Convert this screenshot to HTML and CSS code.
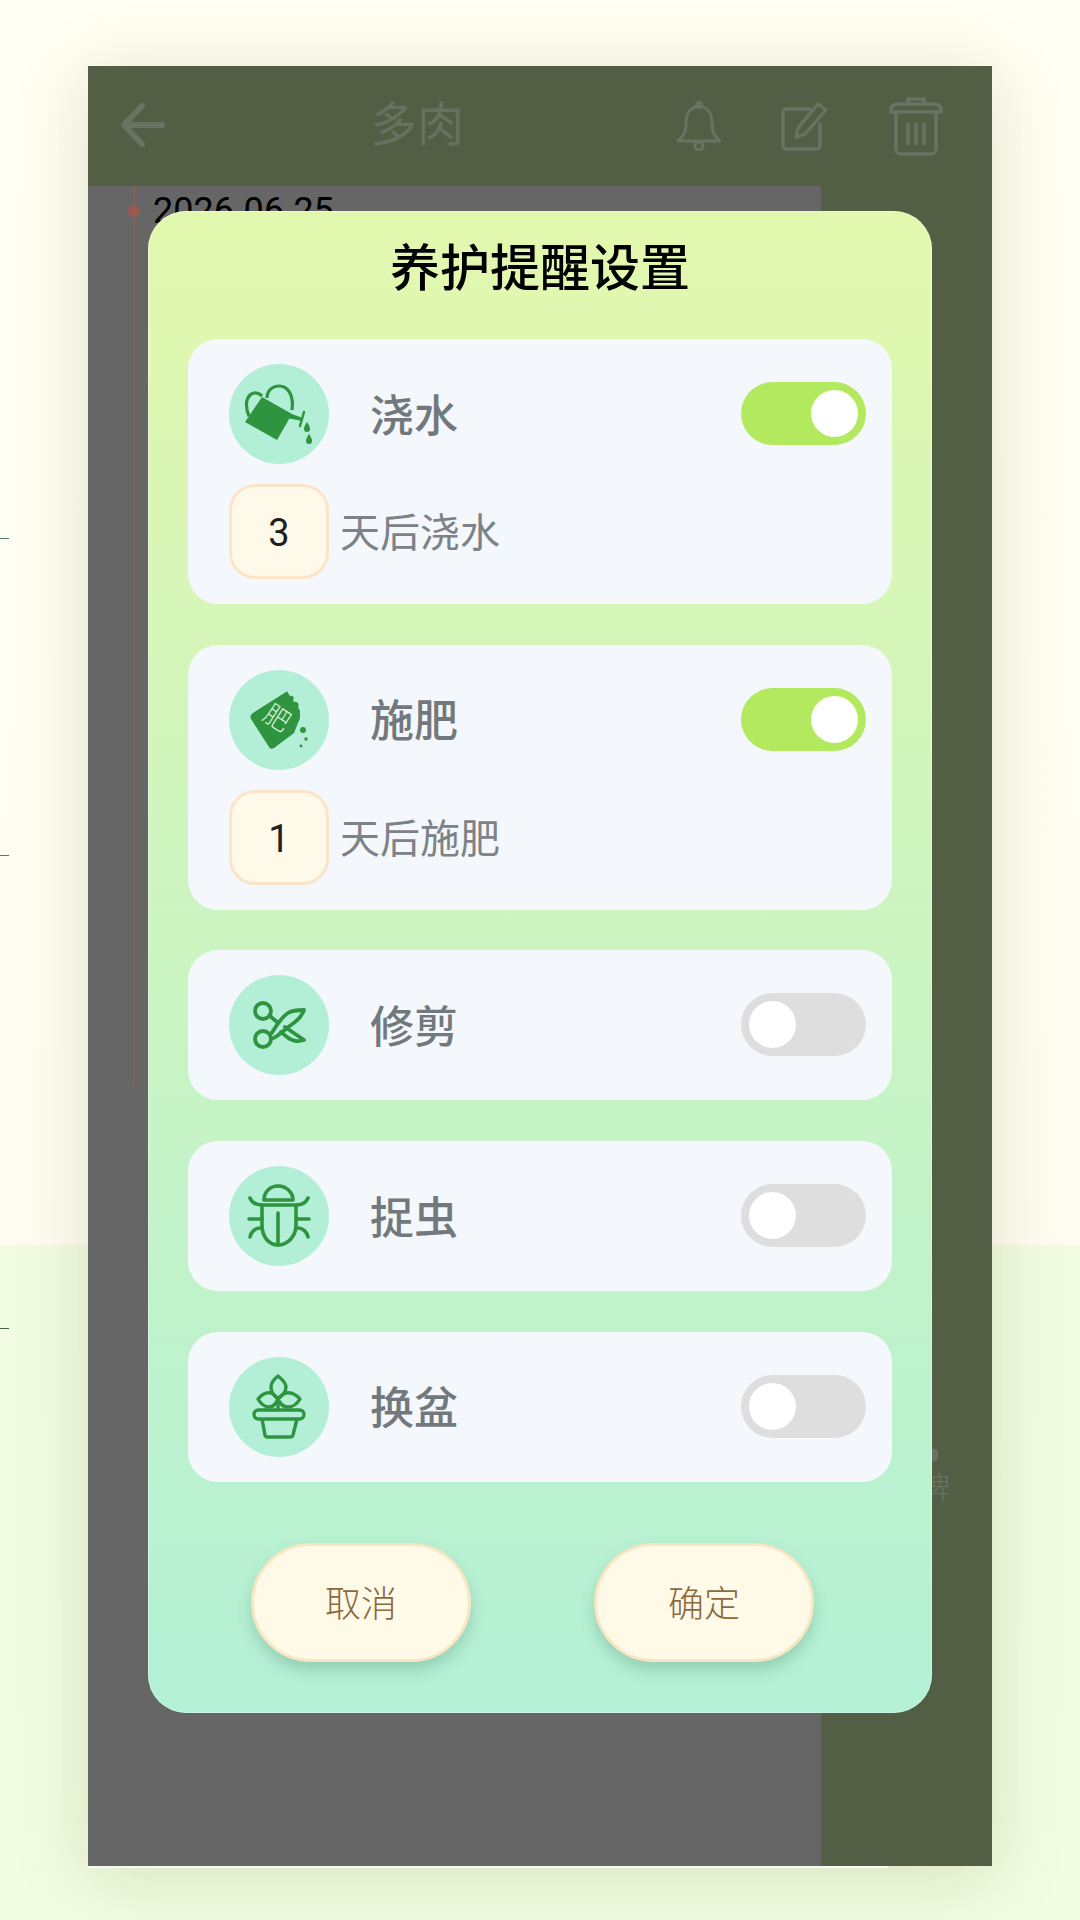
FILE: index.html
```html
<!DOCTYPE html>
<html lang="zh-CN">
<head>
    <meta charset="UTF-8">
    <meta name="viewport" content="width=device-width, initial-scale=1.0">
    <title>养护提醒设置</title>
    <link rel="stylesheet" href="styles.css">
</head>
<body>
    <span class="tick tick-a"></span>
    <span class="tick tick-b"></span>
    <span class="tick tick-c"></span>

    <div class="screen">
        <header class="topbar">
            <svg class="back-icon" viewBox="0 0 44 44" fill="none" stroke="currentColor" stroke-width="6" stroke-linecap="round" stroke-linejoin="round"><path d="M41 22H5M21 3 3 22l18 19"/></svg>
            <span class="topbar-title">多肉</span>
            <div class="topbar-actions">
                <svg class="bell-icon" viewBox="0 0 48 50" fill="none" stroke="currentColor" stroke-width="3" stroke-linejoin="round"><path d="M24 5c-9 1-13 8-13 17 0 8-1 12-8 18h42c-7-6-8-10-8-18 0-9-4-16-13-17Z"/><circle cx="24" cy="4" r="2.4"/><circle cx="24" cy="45" r="4"/></svg>
                <svg class="edit-icon" viewBox="0 0 48 50" fill="none" stroke="currentColor" stroke-width="3.4" stroke-linejoin="round"><path d="M31 8H6a3 3 0 0 0-3 3v34a3 3 0 0 0 3 3h31a3 3 0 0 0 3-3V22"/><path d="m16 36 2-9L38 3l8 6-21 24Z"/></svg>
                <svg class="trash-icon" viewBox="0 0 56 60" fill="none" stroke="currentColor" stroke-width="3.6" stroke-linejoin="round"><path d="M3 14c0-4 3-6 7-6h36c4 0 7 2 7 6v2H3Z"/><path d="M20 8V3h16v5"/><path d="M8 16v37c0 3 2 5 5 5h30c3 0 5-2 5-5V16"/><path d="M20 27v22M28 27v22M36 27v22"/></svg>
            </div>
        </header>

        <div class="screen-body">
            <main class="timeline">
                <span class="timeline-line"></span>
                <span class="timeline-dot"></span>
                <span class="timeline-date">2026.06.25</span>
            </main>
            <aside class="sidebar">
                <span class="side-badge"></span>
                <span class="side-text">铭牌</span>
            </aside>
        </div>

        <section class="dialog">
            <h1 class="dialog-title">养护提醒设置</h1>

            <div class="card">
                <div class="card-row">
                    <span class="icon-circle">
                        <svg viewBox="0 0 100 100" fill="none" stroke="#2e9440"><path fill="#2e9440" stroke="none" d="M33 33 63 50 48 76 16 58ZM60 49l14 5-1 3-15-3Z"/><path stroke-width="2.5" stroke-linecap="round" d="m75 48-4 14"/><path stroke-width="3.2" d="M38 34c0-7 5-12 12-12 9 0 15 9 13 24"/><path stroke-width="3.2" d="M33 32c-4-4-9-4-12-1-4 4-5 12-1 21"/><path fill="#2e9440" stroke="none" d="M78 58c2 3 3 5 3 7a3 3 0 0 1-6 0c0-2 1-4 3-7ZM80 70c2 3 3 5 3 7a3 3 0 0 1-6 0c0-2 1-4 3-7Z"/></svg>
                    </span>
                    <span class="card-label">浇水</span>
                    <span class="switch switch-on"><span class="switch-knob"></span></span>
                </div>
                <div class="card-row card-days">
                    <span class="days-input">3</span>
                    <span class="days-text">天后浇水</span>
                </div>
            </div>

            <div class="card">
                <div class="card-row">
                    <span class="icon-circle">
                        <svg viewBox="0 0 100 100"><path fill="#2e9440" d="M24 43 57 22c1-1 2 0 2 1l2 3c3-1 5 2 3 4l1 2c3-1 6 2 4 5l2 4v7l-6 15-20 15c-2 1-4 1-5-1L22 49c-1-2-1-4 2-6Z"/><text class="bag-text" x="0" y="9" transform="translate(48 48) rotate(33)">肥</text><circle cx="74" cy="60" r="3" fill="#2e9440"/><circle cx="77" cy="69" r="1.7" fill="#2e9440"/><circle cx="72" cy="76" r="1.4" fill="#2e9440"/></svg>
                    </span>
                    <span class="card-label">施肥</span>
                    <span class="switch switch-on"><span class="switch-knob"></span></span>
                </div>
                <div class="card-row card-days">
                    <span class="days-input">1</span>
                    <span class="days-text">天后施肥</span>
                </div>
            </div>

            <div class="card">
                <div class="card-row">
                    <span class="icon-circle">
                        <svg viewBox="0 0 100 100" fill="none" stroke="#2e9440" stroke-width="3.8" stroke-linejoin="round" stroke-linecap="round"><circle cx="34" cy="36" r="8"/><circle cx="34" cy="64" r="8"/><path d="M42 59c5-7 9-16 17-21 5-3 11-3 16-3-2 6-7 11-13 15l-14 11c-1 1-3 2-6 3"/><path d="m41 41 7 6M56 52l19 13c-6 2-12 1-17-3l-6-5"/><circle cx="47" cy="50" r="1.2" fill="#2e9440" stroke="none"/></svg>
                    </span>
                    <span class="card-label">修剪</span>
                    <span class="switch"><span class="switch-knob"></span></span>
                </div>
            </div>

            <div class="card">
                <div class="card-row">
                    <span class="icon-circle">
                        <svg viewBox="0 0 100 100" fill="none" stroke="#2e9440" stroke-width="3.6" stroke-linecap="round" stroke-linejoin="round"><path d="M35 34c0-8 6-14 14-14s15 6 15 14Z"/><path d="M21 32c2 5 6 7 12 7h34c6 0 10-2 12-7"/><path d="M33 39v20c0 12 7 20 16 20s18-8 18-20V39"/><path d="M49 47v32M20 53h13M67 53h13M21 71c1-5 5-9 10-9M79 71c-1-5-5-9-10-9"/></svg>
                    </span>
                    <span class="card-label">捉虫</span>
                    <span class="switch"><span class="switch-knob"></span></span>
                </div>
            </div>

            <div class="card">
                <div class="card-row">
                    <span class="icon-circle">
                        <svg viewBox="0 0 100 100" fill="none" stroke="#2e9440" stroke-width="3.4" stroke-linejoin="round"><path d="M49 19c-5 4-7 8-7 11 0 5 3 9 7 12 4-3 8-7 8-12 0-3-3-7-8-11Z"/><path d="M29 42c4-5 9-7 13-6 3 1 5 3 7 6-2 5-5 8-9 8-4 0-8-3-11-8Z"/><path d="M71 42c-4-5-10-7-14-6-3 1-6 3-8 6 2 5 6 8 10 8 4 0 9-3 12-8Z"/><path d="M49 42v11"/><rect x="25" y="53" width="50" height="9" rx="4.5"/><path d="m33 62 3 16c0 1 1 2 2 2h24c1 0 2-1 2-2l4-16"/></svg>
                    </span>
                    <span class="card-label">换盆</span>
                    <span class="switch"><span class="switch-knob"></span></span>
                </div>
            </div>

            <div class="dialog-buttons">
                <button class="dialog-btn">取消</button>
                <button class="dialog-btn">确定</button>
            </div>
        </section>
    </div>
</body>
</html>
```

FILE: styles.css
```css
* {
    box-sizing: border-box;
}

body {
    margin: 0;
    height: 1920px;
    overflow: hidden;
    position: relative;
    font-family: "Noto Sans CJK SC", "Noto Sans", sans-serif;
    background: linear-gradient(to bottom, #fffff3 0, #fffdf1 1245px, #f1fce2 1245px, #f2fde2 100%);
}

.tick {
    position: absolute;
    left: 0;
    width: 9px;
    height: 1px;
    background-color: #4b7a70;
}

.tick-a { top: 538px; }
.tick-b { top: 855px; }
.tick-c { top: 1328px; background-color: #46604a; }

.screen {
    position: relative;
    width: 904px;
    height: 1800px;
    margin: 66px 0 0 88px;
    display: flex;
    flex-direction: column;
    background-color: #535f45;
    box-shadow: 0 10px 70px rgba(110, 110, 50, 0.2);
}

/* the white sliver of the page card that pokes out under the scrim */
.screen::after {
    content: "";
    position: absolute;
    left: 0;
    top: 100%;
    width: 800px;
    height: 2px;
    background-color: #f6f8f2;
}

.topbar {
    height: 120px;
    display: flex;
    align-items: center;
    padding: 0 48px 0 33px;
    color: #6a7262;
}

.back-icon {
    width: 44px;
    height: 44px;
    margin-top: -2px;
}

.topbar-title {
    margin-left: 205px;
    margin-top: -10px;
    font-size: 47px;
    font-weight: 400;
    line-height: 50px;
    color: #687060;
}

.topbar-actions {
    margin-left: auto;
    display: flex;
    align-items: center;
}

.bell-icon {
    width: 48px;
    height: 50px;
}

.edit-icon {
    width: 48px;
    height: 50px;
    margin-left: 57px;
}

.trash-icon {
    width: 56px;
    height: 60px;
    margin-left: 60px;
}

.screen-body {
    flex: 1;
    display: flex;
}

.timeline {
    position: relative;
    width: 733px;
    background-color: #666666;
}

.timeline-line {
    position: absolute;
    left: 45px;
    top: 0;
    width: 2px;
    height: 901px;
    background-color: #8a5e57;
}

.timeline-dot {
    position: absolute;
    left: 40px;
    top: 19px;
    width: 12px;
    height: 12px;
    border-radius: 50%;
    background-color: #995a50;
}

.timeline-date {
    position: absolute;
    left: 65px;
    top: 4px;
    font-family: Roboto, sans-serif;
    font-size: 36px;
    line-height: 42px;
    color: #000000;
}

.sidebar {
    flex: 1;
    display: flex;
    flex-direction: column;
    align-items: flex-end;
    padding: 1263px 42px 0 0;
}

.side-badge {
    width: 18px;
    height: 12px;
    margin-right: 12px;
    border-radius: 4px;
    background-color: #6a7361;
}

.side-text {
    font-size: 30px;
    font-weight: 300;
    line-height: 34px;
    margin-top: 7px;
    color: #6a7361;
}

.dialog {
    position: absolute;
    left: 60px;
    top: 145px;
    width: 784px;
    height: 1502px;
    padding: 0 40px;
    border-radius: 38px;
    background: linear-gradient(to bottom, #e3f8ae 0%, #b3f0d6 100%);
    box-shadow: inset 0 0 0 1px rgba(255, 255, 255, 0.35);
}

.dialog-title {
    margin: 0;
    height: 128px;
    font-size: 50px;
    font-weight: 500;
    line-height: 106px;
    text-align: center;
    color: #000000;
}

.card {
    padding: 25px 26px 25px 41px;
    margin-bottom: 40.7px;
    border-radius: 30px;
    background-color: #f4f8fd;
}

.card-row {
    display: flex;
    align-items: center;
}

.card-days {
    margin-top: 20px;
}

.icon-circle {
    width: 100px;
    height: 100px;
    border-radius: 50%;
    background-color: #b3efd6;
}

.icon-circle svg {
    display: block;
    width: 100px;
    height: 100px;
}

.bag-text {
    font-size: 26px;
    fill: #d6f2d2;
    text-anchor: middle;
    font-weight: 300;
}

.card-label {
    margin-left: 41px;
    margin-top: -3px;
    font-size: 44px;
    font-weight: 500;
    color: #73787c;
}

.switch {
    margin-left: auto;
    margin-top: -1px;
    width: 125px;
    height: 63px;
    padding: 8px;
    display: flex;
    justify-content: flex-start;
    border-radius: 32px;
    background-color: #dedede;
}

.switch-on {
    justify-content: flex-end;
    background-color: #b3e95e;
}

.switch-knob {
    width: 47px;
    height: 47px;
    border-radius: 50%;
    background-color: #ffffff;
}

.days-input {
    width: 100px;
    height: 95px;
    padding-top: 3px;
    display: flex;
    align-items: center;
    justify-content: center;
    border: 3px solid #fbe5c8;
    border-radius: 26px;
    background-color: #fff9ea;
    font-family: Roboto, sans-serif;
    font-size: 38px;
    color: #1f1f1f;
}

.days-text {
    margin-left: 11px;
    margin-top: -3px;
    font-size: 40px;
    font-weight: 400;
    color: #7d8287;
}

.dialog-buttons {
    display: flex;
    padding-left: 63px;
    gap: 123px;
    margin-top: 61px;
}

.dialog-btn {
    width: 220px;
    height: 119px;
    padding: 0 0 3px;
    border: 3px solid #f6e6c2;
    border-radius: 60px;
    background-color: #fff9e8;
    box-shadow: 0 8px 14px rgba(60, 110, 90, 0.25);
    font-family: inherit;
    font-size: 36px;
    font-weight: 300;
    color: #8b6a3e;
}
```
